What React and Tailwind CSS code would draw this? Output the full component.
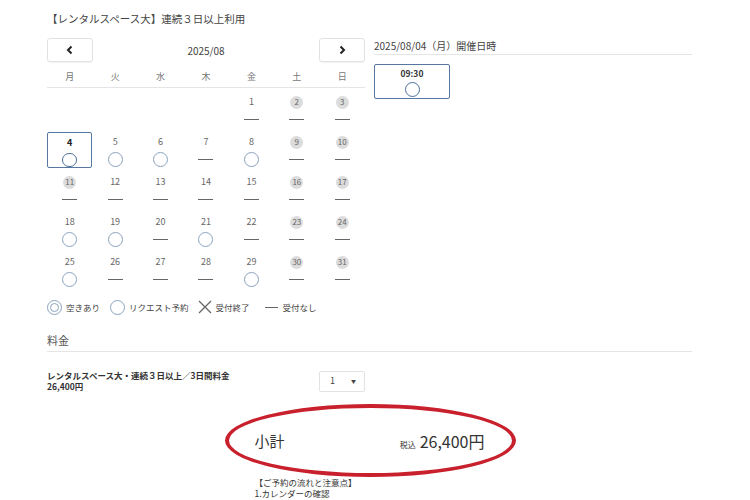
import React from 'react';

const font = { fontFamily: '"Noto Sans CJK JP", "Noto Sans", sans-serif' };

// status: o = 空きあり, d = 受付なし
const weeks = [
  [null, null, null, null, { d: 1, s: 'd' }, { d: 2, s: 'd', h: true }, { d: 3, s: 'd', h: true }],
  [{ d: 4, s: 'o', sel: true }, { d: 5, s: 'o' }, { d: 6, s: 'o' }, { d: 7, s: 'd' }, { d: 8, s: 'o' }, { d: 9, s: 'd', h: true }, { d: 10, s: 'd', h: true }],
  [{ d: 11, s: 'd', h: true }, { d: 12, s: 'd' }, { d: 13, s: 'd' }, { d: 14, s: 'd' }, { d: 15, s: 'd' }, { d: 16, s: 'd', h: true }, { d: 17, s: 'd', h: true }],
  [{ d: 18, s: 'o' }, { d: 19, s: 'o' }, { d: 20, s: 'd' }, { d: 21, s: 'o' }, { d: 22, s: 'd' }, { d: 23, s: 'd', h: true }, { d: 24, s: 'd', h: true }],
  [{ d: 25, s: 'o' }, { d: 26, s: 'd' }, { d: 27, s: 'd' }, { d: 28, s: 'd' }, { d: 29, s: 'o' }, { d: 30, s: 'd', h: true }, { d: 31, s: 'd', h: true }],
];

const Circle = ({ dark }) => (
  <div className={`w-[15px] h-[15px] rounded-full border-[1.5px] ${dark ? 'border-[#4d6f99]' : 'border-[#8aa3bf]'}`}></div>
);

const Dash = () => (
  <div className="w-[15px] h-[15px] flex items-center">
    <div className="w-full h-[1px] bg-[#666]"></div>
  </div>
);

const DayCell = ({ day }) => {
  if (!day) return <div className="h-[40px]"></div>;
  return (
    <div className="h-[40px] pt-[4px]">
      <div
        className={`h-[36px] flex flex-col items-center pt-[4px] gap-[4px] ${
          day.sel ? 'border-[1.5px] border-[#5577a0] rounded-[2px] pt-[2.5px]' : ''
        }`}
      >
        <div className="h-[12px] flex items-center justify-center">
          {day.h ? (
            <span className="w-[13px] h-[13px] rounded-full bg-[#dcdcdc] text-[8px] text-[#666] flex items-center justify-center">
              {day.d}
            </span>
          ) : (
            <span className={`text-[9px] ${day.sel ? 'font-bold text-[#222]' : 'text-[#666]'}`}>{day.d}</span>
          )}
        </div>
        {day.s === 'o' ? <Circle dark={day.sel} /> : <Dash />}
      </div>
    </div>
  );
};

const Chevron = ({ right }) => (
  <svg width="10" height="10" viewBox="0 0 10 10">
    <path
      d={right ? 'M3.5 1.5 L7 5 L3.5 8.5' : 'M6.5 1.5 L3 5 L6.5 8.5'}
      fill="none"
      stroke="#222"
      strokeWidth="2"
    />
  </svg>
);

const Calendar = () => (
  <div className="w-[318px]">
    <div className="flex items-center justify-between h-[24px]">
      <button className="w-[46px] h-[24px] border border-[#e2e2e2] rounded-[3px] shadow-[0_1px_1px_rgba(0,0,0,0.05)] flex items-center justify-center">
        <Chevron />
      </button>
      <span className="text-[10px] text-[#444]">2025/08</span>
      <button className="w-[46px] h-[24px] border border-[#e2e2e2] rounded-[3px] shadow-[0_1px_1px_rgba(0,0,0,0.05)] flex items-center justify-center">
        <Chevron right />
      </button>
    </div>
    <div className="grid grid-cols-7 mt-[4px] h-[22px] items-center border-b border-[#e5e5e5] text-[9px] text-[#777]">
      {['月', '火', '水', '木', '金', '土', '日'].map((w) => (
        <div key={w} className="text-center">{w}</div>
      ))}
    </div>
    {weeks.map((wk, i) => (
      <div key={i} className="grid grid-cols-7">
        {wk.map((d, j) => (
          <DayCell key={j} day={d} />
        ))}
      </div>
    ))}
  </div>
);

const Legend = () => (
  <div className="flex items-center text-[8.5px] text-[#444] h-[16px]">
    <div className="w-[15px] h-[15px] rounded-full border-[1.5px] border-[#8aa3bf] flex items-center justify-center">
      <div className="w-[9px] h-[9px] rounded-full border-[1.5px] border-[#8aa3bf]"></div>
    </div>
    <span className="ml-[4px]">空きあり</span>
    <div className="ml-[10px]"><Circle /></div>
    <span className="ml-[4px]">リクエスト予約</span>
    <svg className="ml-[9px]" width="14" height="14" viewBox="0 0 14 14">
      <path d="M1 1 L13 13 M13 1 L1 13" stroke="#666" strokeWidth="1.3" />
    </svg>
    <span className="ml-[4px]">受付終了</span>
    <div className="ml-[15px] w-[13px] h-[1px] bg-[#666]"></div>
    <span className="ml-[5px]">受付なし</span>
  </div>
);

export default function App() {
  return (
    <div className="w-[750px] h-[500px] overflow-hidden bg-white pl-[47px] pr-[58px] pt-[11px]" style={font}>
      <div className="text-[10.5px] text-[#444] h-[16px] leading-[16px]">【レンタルスペース大】連続３日以上利用</div>
      <div className="flex mt-[11px]">
        <div>
          <Calendar />
          <div className="mt-[11px]">
            <Legend />
          </div>
        </div>
        <div className="ml-[9px] flex-1 -mt-[1px]">
          <div className="text-[10px] text-[#444] h-[18px] leading-[17px] border-b border-[#e5e5e5]">2025/08/04（月）開催日時</div>
          <div className="mt-[9px] w-[76px] h-[35px] border-[1.5px] border-[#5577a0] rounded-[2px] flex flex-col items-center pt-[2px] gap-[2px]">
            <span className="text-[8.5px] font-bold text-[#333]">09:30</span>
            <Circle dark />
          </div>
        </div>
      </div>
      <div className="mt-[17px] text-[11px] text-[#555] h-[16px] leading-[16px]">料金</div>
      <div className="mt-[3px] border-t border-[#e5e5e5]"></div>
      <div className="mt-[18px] flex items-center">
        <div className="w-[272px] text-[8.5px] font-bold text-[#333] leading-[11px]">
          <div>レンタルスペース大・連続３日以上／3日間料金</div>
          <div>26,400円</div>
        </div>
        <div className="w-[46px] h-[21px] border border-[#e2e2e2] rounded-[2px] flex items-center justify-between pl-[10px] pr-[8px] text-[9px] text-[#444]">
          <span>1</span>
          <span className="text-[5px]">▼</span>
        </div>
      </div>
      <div className="relative mt-[21px] w-[230px] mx-auto">
        <div className="absolute left-[-30px] top-[-9px] w-[291px] h-[73px] rounded-[50%] border-[4px] border-[#c8202c]"></div>
        <div className="flex items-center justify-between h-[56px]">
          <span className="text-[15px] text-[#333]">小計</span>
          <span className="text-[#333] flex items-baseline">
            <span className="text-[8px] mr-[4px]">税込</span>
            <span className="text-[16px]">26,400円</span>
          </span>
        </div>
        <div className="text-[8.5px] text-[#333] leading-[11px] mt-[8px]">
          <div>【ご予約の流れと注意点】</div>
          <div>1.カレンダーの確認</div>
        </div>
      </div>
    </div>
  );
}
